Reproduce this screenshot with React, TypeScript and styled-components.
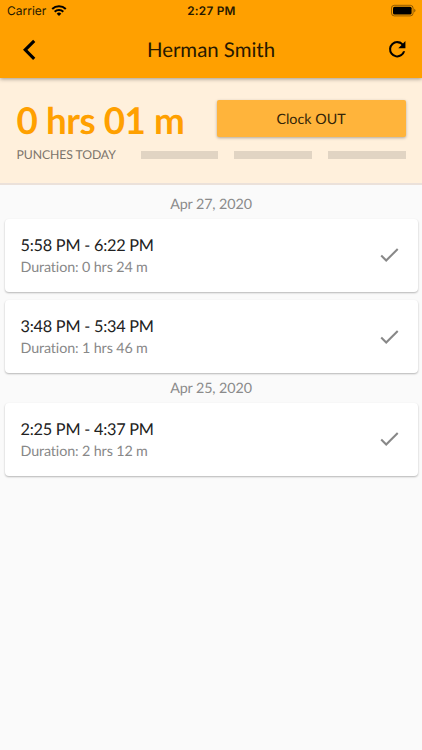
import React from "react";
import styled, { createGlobalStyle } from "styled-components";

const GlobalStyle = createGlobalStyle`
  *, *::before, *::after { box-sizing: border-box; }
  body { margin: 0; background: #fafafa; text-rendering: geometricPrecision; }
  button { text-rendering: inherit; }
`;

const Screen = styled.main`
  width: 422px;
  height: 750px;
  overflow: hidden;
  display: flex;
  flex-direction: column;
  background: #fafafa;
  color: #212121;
  font-family: Lato, sans-serif;
  font-variant-ligatures: none;
`;

const Header = styled.header`
  flex: none;
  height: 78px;
  background: #ffa000;
  color: #261800;
  box-shadow: 0 1px 4px rgba(0, 0, 0, 0.38);
  z-index: 1;
`;

const StatusBar = styled.div`
  height: 21px;
  display: grid;
  grid-template-columns: 1fr auto 1fr;
  align-items: center;
  padding: 0 6px 0 7px;
  font: 400 12px/18px Inter, sans-serif;
`;

const Carrier = styled.div`
  display: flex;
  align-items: center;
  gap: 5px;
`;

const Clock = styled.div`
  font-weight: 600;
  font-size: 11.8px;
  letter-spacing: 0.25px;
`;

const BatterySlot = styled.div`
  display: flex;
  justify-content: flex-end;
`;

const NavBar = styled.div`
  height: 57px;
  display: grid;
  grid-template-columns: 57px 1fr 57px;
  align-items: center;
`;

const NavButton = styled.button`
  height: 56px;
  padding: 0;
  border: 0;
  background: none;
  color: #000;
  display: flex;
  align-items: center;
  justify-content: center;
`;

const RefreshButton = styled(NavButton)`
  padding-left: 7px;
`;

const Title = styled.h1`
  margin: 0;
  text-align: center;
  font-size: 20.4px;
  line-height: 24px;
  font-weight: 400;
`;

const Summary = styled.section`
  flex: none;
  height: 107px;
  padding: 22px 16.5px 0;
  background: #fff0dc;
  border-bottom: 2px solid #ebe1da;
`;

const SummaryTop = styled.div`
  display: flex;
  justify-content: space-between;
  height: 37px;
`;

const Total = styled.div`
  font-size: 36.8px;
  line-height: 40px;
  font-weight: 700;
  letter-spacing: -0.5px;
  word-spacing: 0.2px;
  color: #ffa000;
  white-space: nowrap;
`;

const ClockButton = styled.button`
  width: 189px;
  height: 37px;
  padding: 0;
  border: 0;
  border-radius: 2px;
  background: #ffb43b;
  color: #332408;
  font: 400 14.3px/37px Lato, sans-serif;
  box-shadow: 0 1px 3px rgba(0, 0, 0, 0.3);
  padding-top: 1px;
`;

const SummaryBottom = styled.div`
  display: flex;
  align-items: center;
  height: 36px;
`;

const SummaryLabel = styled.div`
  width: 124px;
  font-size: 12.25px;
  line-height: 16px;
  letter-spacing: -0.1px;
  color: #7c746b;
`;

const Bars = styled.div`
  flex: 1;
  display: grid;
  grid-template-columns: repeat(3, 1fr);
  gap: 16.3px;
`;

const Bar = styled.div`
  height: 8px;
  background: #e1d4c3;
`;

const DateLabel = styled.h2<{ $first?: boolean }>`
  margin: 0;
  height: ${(p) => (p.$first ? "34px" : "29.5px")};
  padding-top: ${(p) => (p.$first ? "11px" : "7px")};
  text-align: center;
  font-size: 14.3px;
  line-height: 18px;
  letter-spacing: -0.1px;
  font-weight: 400;
  color: #8b8b8b;
`;

const PunchList = styled.div`
  display: grid;
  gap: 8.7px;
  padding: 0 4.5px;
`;

const PunchCard = styled.article`
  height: 72.8px;
  padding: 0 16px;
  display: flex;
  align-items: center;
  justify-content: space-between;
  background: #fff;
  border-radius: 4px;
  box-shadow: 0 1px 2px rgba(0, 0, 0, 0.28);
`;

const PunchText = styled.div`
  padding-top: 2px;
`;

const PunchTime = styled.div`
  font-size: 16.3px;
  line-height: 22px;
  letter-spacing: -0.24px;
  color: #212121;
`;

const Duration = styled.div`
  font-size: 14.3px;
  line-height: 21px;
  letter-spacing: -0.12px;
  color: #888;
`;

const days = [
  {
    date: "Apr 27, 2020",
    punches: [
      { time: "5:58 PM - 6:22 PM", duration: "0 hrs 24 m" },
      { time: "3:48 PM - 5:34 PM", duration: "1 hrs 46 m" },
    ],
  },
  {
    date: "Apr 25, 2020",
    punches: [{ time: "2:25 PM - 4:37 PM", duration: "2 hrs 12 m" }],
  },
];

const WifiIcon = () => (
  <svg width="16" height="12" viewBox="0 0 16 12" fill="none" stroke="#000" strokeWidth="2">
    <path d="M1.2 4a9.7 9.7 0 0 1 13.6 0M3.7 6.7a6.1 6.1 0 0 1 8.6 0" />
    <path d="M8 11 5.7 8.7a3.2 3.2 0 0 1 4.6 0Z" fill="#000" stroke="none" />
  </svg>
);

const BatteryIcon = () => (
  <svg width="25" height="13" viewBox="0 -0.8 25 13">
    <rect x=".5" y=".5" width="21.6" height="10.6" rx="2.8" fill="none" stroke="#000" strokeOpacity=".42" />
    <rect x="2" y="2" width="18.6" height="7.6" rx="1.5" />
    <path d="M23.3 4v3.6c1.5-.6 1.5-3 0-3.6Z" fillOpacity=".5" />
  </svg>
);

const BackIcon = () => (
  <svg width="24" height="24" viewBox="0 0 24 24" fill="none" stroke="currentColor" strokeWidth="3.1">
    <path d="M17.2 2.8 8.2 11.8l9 9" />
  </svg>
);

const RefreshIcon = () => (
  <svg width="24.5" height="24.5" viewBox="0 0 24 24" fill="currentColor">
    <path d="M17.65 6.35A7.958 7.958 0 0 0 12 4a8 8 0 1 0 7.73 10h-2.08A6 6 0 1 1 12 6c1.66 0 3.14.69 4.22 1.78L13 11h7V4l-2.35 2.35z" />
  </svg>
);

const CheckIcon = () => (
  <svg width="24.5" height="24.5" viewBox="0 0.4 24 24" fill="#888">
    <path d="M9 16.17 4.83 12l-1.42 1.41L9 19 21 7l-1.41-1.41z" />
  </svg>
);

export default function App() {
  return (
    <>
      <GlobalStyle />
      <Screen>
        <Header>
          <StatusBar>
            <Carrier>
              Carrier
              <WifiIcon />
            </Carrier>
            <Clock>2:27 PM</Clock>
            <BatterySlot>
              <BatteryIcon />
            </BatterySlot>
          </StatusBar>
          <NavBar>
            <NavButton aria-label="Back">
              <BackIcon />
            </NavButton>
            <Title>Herman Smith</Title>
            <RefreshButton aria-label="Refresh">
              <RefreshIcon />
            </RefreshButton>
          </NavBar>
        </Header>
        <Summary>
          <SummaryTop>
            <Total>0 hrs 01 m</Total>
            <ClockButton>Clock OUT</ClockButton>
          </SummaryTop>
          <SummaryBottom>
            <SummaryLabel>PUNCHES TODAY</SummaryLabel>
            <Bars>
              <Bar />
              <Bar />
              <Bar />
            </Bars>
          </SummaryBottom>
        </Summary>
        {days.map((day, i) => (
          <section key={day.date}>
            <DateLabel $first={i === 0}>{day.date}</DateLabel>
            <PunchList>
              {day.punches.map((punch) => (
                <PunchCard key={punch.time}>
                  <PunchText>
                    <PunchTime>{punch.time}</PunchTime>
                    <Duration>Duration: {punch.duration}</Duration>
                  </PunchText>
                  <CheckIcon />
                </PunchCard>
              ))}
            </PunchList>
          </section>
        ))}
      </Screen>
    </>
  );
}
